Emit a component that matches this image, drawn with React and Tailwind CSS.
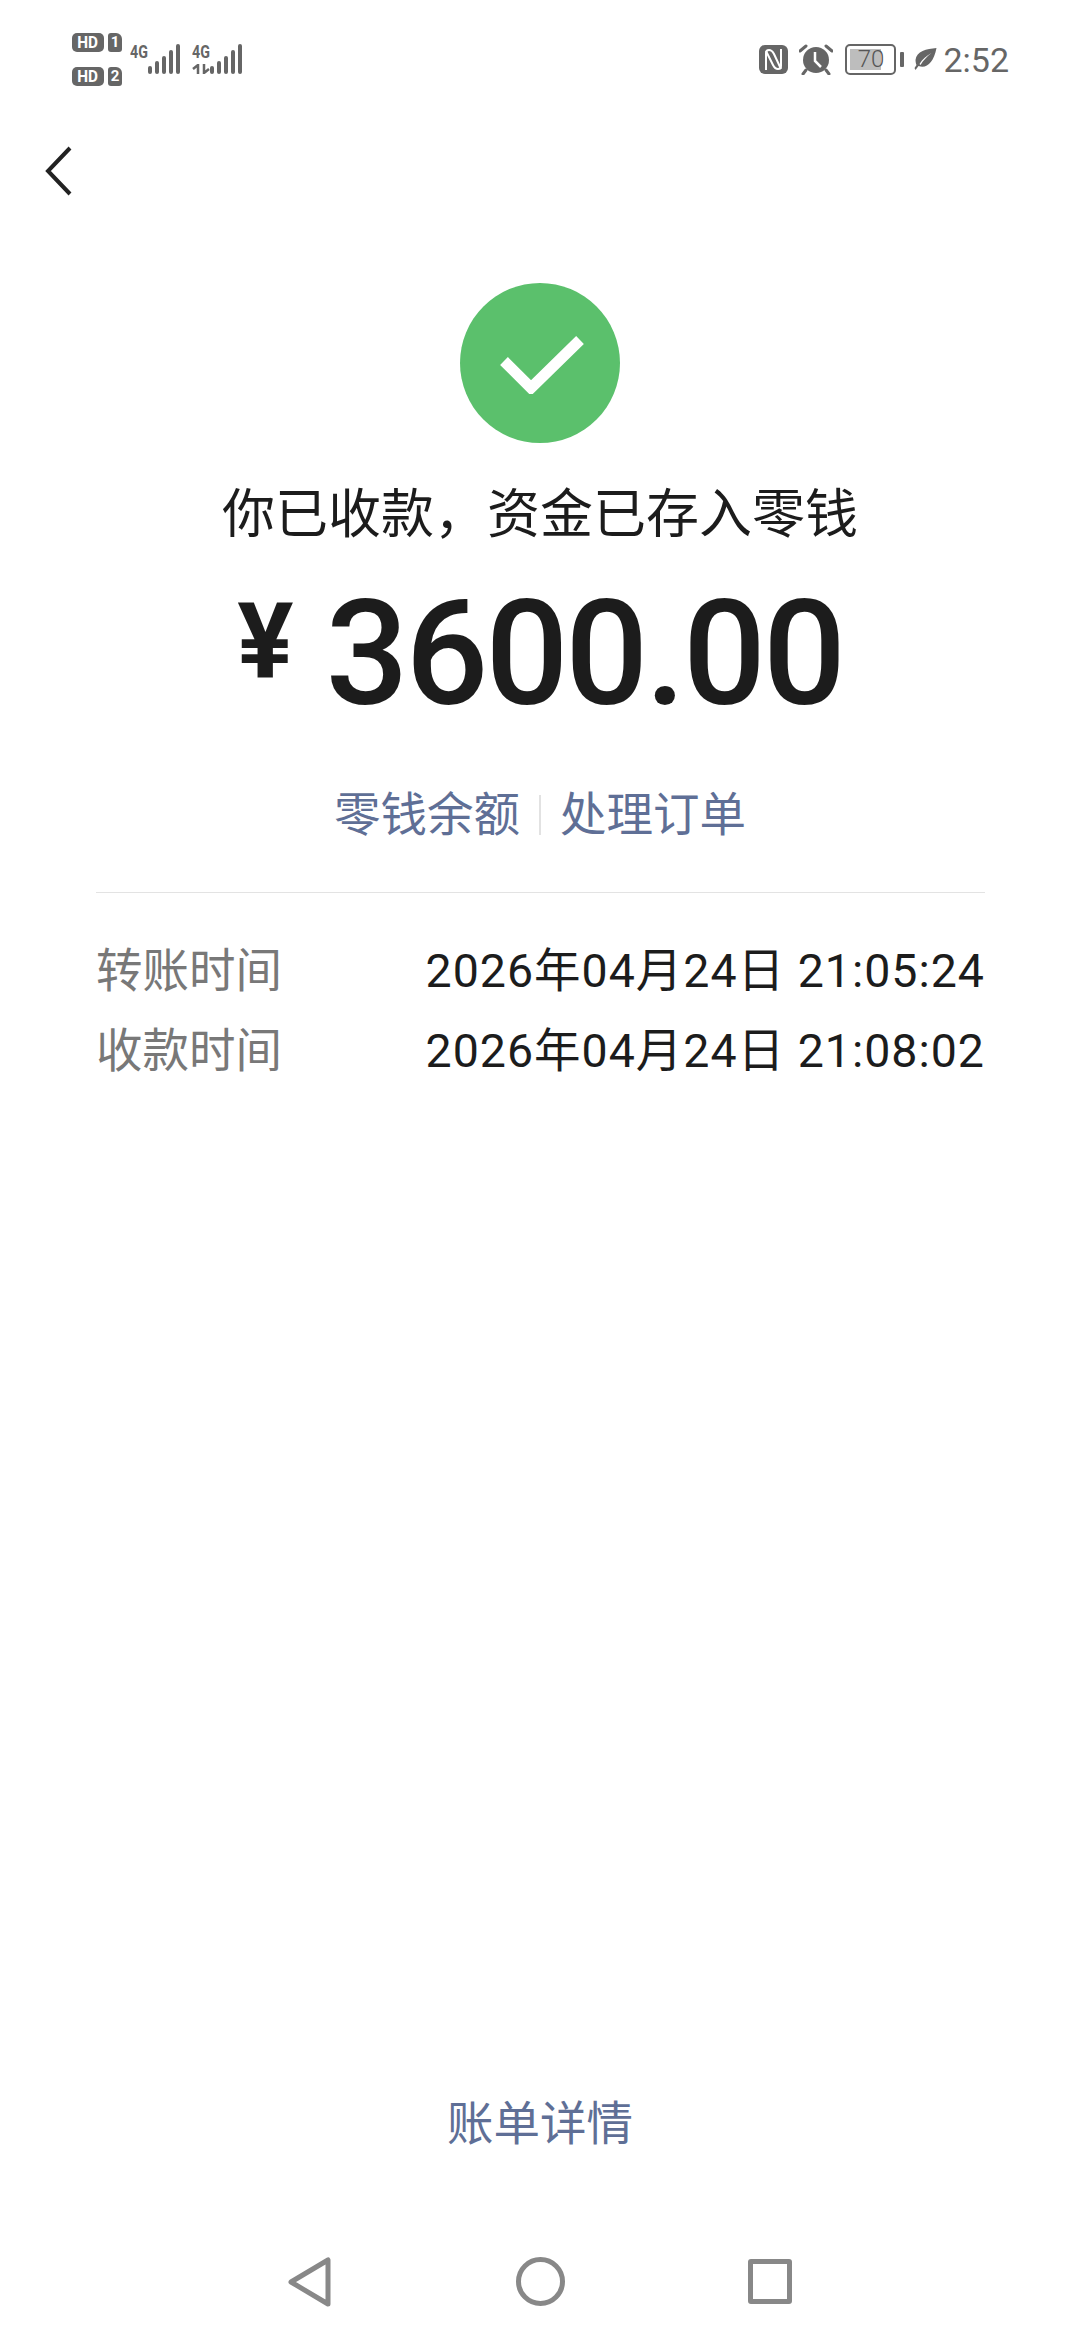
const cjk = { fontFamily: "Roboto, 'Noto Sans CJK SC', sans-serif" };

function HdBadge({ n }) {
  return (
    <div className="flex items-center gap-[4px]">
      <span className="flex h-[19px] w-[32px] items-center justify-center rounded-[5px] bg-[#666666] text-[17px] leading-none font-bold text-white font-['Roboto',sans-serif]">
        <span className="scale-x-90">HD</span>
      </span>
      <span className="flex h-[19px] w-[14px] items-center justify-center rounded-[3px] rounded-tr-[6px] bg-[#666666] text-[15px] leading-none font-bold text-white font-['Roboto',sans-serif]">
        {n}
      </span>
    </div>
  );
}

function Bars() {
  return (
    <svg width="33" height="31" viewBox="0 0 33 31" fill="#666666">
      <rect x="0" y="22" width="4" height="8" rx="2" />
      <rect x="7" y="17" width="4" height="13" rx="2" />
      <rect x="14" y="12" width="4" height="18" rx="2" />
      <rect x="21" y="6" width="4" height="24" rx="2" />
      <rect x="28" y="0" width="4" height="30" rx="2" />
    </svg>
  );
}

function Signal({ arrows }) {
  return (
    <div className="flex items-end">
      <div className="flex h-[31px] w-[18px] flex-col">
        <span className="origin-left scale-x-75 text-[19px] leading-[15px] font-bold text-[#666666] font-['Roboto',sans-serif]">
          4G
        </span>
        {arrows && (
          <svg width="18" height="10" viewBox="0 0 18 10" className="mt-[5px]" fill="none" stroke="#666666" strokeWidth="2.5">
            <path d="M6 10V1L1 5M12 0v9l5-4" />
          </svg>
        )}
      </div>
      <Bars />
    </div>
  );
}

function StatusBar() {
  return (
    <div className="flex h-[118px] items-center justify-between pl-[72px] pr-[71px]">
      <div className="flex items-center gap-[8px]">
        <div className="flex flex-col gap-[15px]">
          <HdBadge n="1" />
          <HdBadge n="2" />
        </div>
        <div className="flex gap-[11px]">
          <Signal />
          <Signal arrows />
        </div>
      </div>
      <div className="flex items-center">
        <svg width="29" height="29" viewBox="0 0 29 29" fill="none">
          <rect width="29" height="29" rx="6" fill="#666666" />
          <path d="M7 25V8q0-3 3-3 3 0 5 4l7 15" stroke="#ffffff" strokeWidth="2" />
          <path d="M22 4v17q0 3-3 3-3 0-5-4L7 6" stroke="#ffffff" strokeWidth="2" />
        </svg>
        <svg width="34" height="31" viewBox="0 0 34 31" className="ml-[11px]">
          <circle cx="17" cy="16" r="13" fill="#666666" />
          <path d="M16 8v9l6 6" fill="none" stroke="#ffffff" strokeWidth="2.500" />
          <path d="M1 7l6-5M33 7l-6-5M7 26l-3 4M27 26l3 4" stroke="#666666" strokeWidth="3" strokeLinecap="round" />
        </svg>
        <div className="relative ml-[12px] flex h-[31px] w-[51px] items-center justify-center overflow-hidden rounded-[5px] border-[2px] border-[#666666]">
          <div className="absolute inset-y-[3px] left-[3px] w-[31px] bg-[#bdbdbd]" />
          <span className="relative text-[24px] leading-none font-light text-[#555555] font-['Roboto',sans-serif]">70</span>
        </div>
        <div className="ml-[4px] h-[15px] w-[4px] rounded-[1px] bg-[#666666]" />
        <svg width="23" height="22" viewBox="0 0 22 22" className="ml-[10px]">
          <path d="M22 0C12 1 2 3 1 12c0 3 1 5 1 5l-2 3 1 2 3-4c8 3 15-3 18-18zM5 16c3-5 7-8 12-11-5 4-8 7-11 12z" fill="#666666" />
        </svg>
        <span className="ml-[6px] mt-[2px] text-[34px] leading-none text-[#666666] font-['Roboto',sans-serif]">2:52</span>
      </div>
    </div>
  );
}

export default function App() {
  return (
    <div className="flex h-[2340px] w-[1080px] flex-col bg-white" style={cjk}>
      <StatusBar />

      <div className="mt-[28px] h-[50px] pl-[45px]">
        <svg width="28" height="50" viewBox="0 0 28 50" fill="none" stroke="#222222" strokeWidth="4">
          <path d="M25 2L3 25l22 23" />
        </svg>
      </div>

      <div className="mt-[87px] flex flex-col items-center">
        <div className="flex h-[160px] w-[160px] items-center justify-center rounded-full bg-[#5bc06c]">
          <svg width="84" height="58" viewBox="0 0 84 58" fill="none" stroke="#ffffff" strokeWidth="11" className="ml-[3px] mt-[3px]">
            <path d="M4 25l27 27L80 4" />
          </svg>
        </div>

        <div className="mt-[36px] text-[53px] leading-[72px] text-[#1c1c1c]">你已收款，资金已存入零钱</div>

        <div className="mt-[24px] flex h-[160px] items-center font-medium text-[#1c1c1c]">
          <span className="mb-[26px] text-[105px] leading-none font-bold">¥</span>
          <span className="ml-[32px] text-[146px] leading-none tracking-[-3px]">3600.00</span>
        </div>

        <div className="mt-[50px] flex h-[60px] items-center text-[46.500px] leading-[60px] text-[#5f6f96]">
          <span>零钱余额</span>
          <div className="mx-[19px] h-[40px] w-[2px] bg-[#e2e2e2]" />
          <span>处理订单</span>
        </div>
      </div>

      <div className="ml-[96px] mr-[95px] mt-[47px] h-[1px] bg-[#e3e3e3]" />

      <div className="ml-[96px] mr-[95px] mt-[38px] flex flex-col text-[46.500px] leading-[80px]">
        <div className="flex justify-between">
          <span className="text-[#787878]">转账时间</span>
          <span className="tracking-[1px] text-[#1c1c1c]">2026年04月24日 21:05:24</span>
        </div>
        <div className="flex justify-between">
          <span className="text-[#787878]">收款时间</span>
          <span className="tracking-[1px] text-[#1c1c1c]">2026年04月24日 21:08:02</span>
        </div>
      </div>

      <div className="mt-auto mb-[64px] text-center text-[46.500px] leading-[72px] text-[#5f6f96]">账单详情</div>

      <div className="flex h-[116px] items-start justify-center pt-[33px]">
        <svg width="44" height="50" viewBox="0 0 44 50" fill="none" stroke="#888888" strokeWidth="5" strokeLinejoin="round" className="mr-[184px]">
          <path d="M40 3v44L3 25z" />
        </svg>
        <div className="h-[49px] w-[49px] rounded-full border-[5px] border-[#888888]" />
        <div className="ml-[183px] mt-[2px] h-[45px] w-[44px] rounded-[3px] border-[5px] border-[#888888]" />
      </div>
    </div>
  );
}
